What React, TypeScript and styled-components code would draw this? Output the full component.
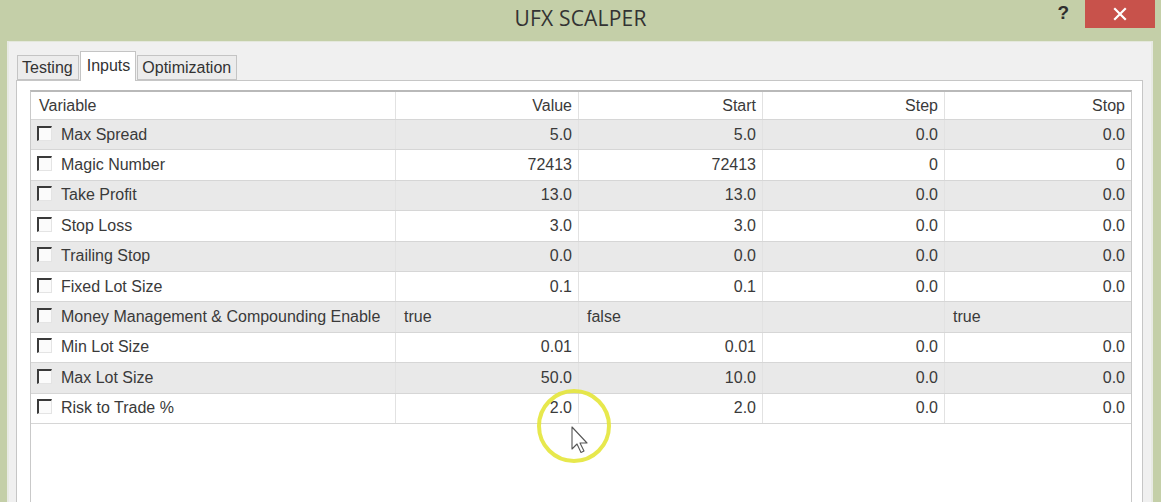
import styled, { createGlobalStyle } from "styled-components";

const GlobalStyle = createGlobalStyle`
  html, body {
    margin: 0;
    padding: 0;
    background: #c4cfa8;
    overflow: hidden;
  }
`;

type Row = {
  name: string;
  value: string;
  start: string;
  step: string;
  stop: string;
  text?: boolean;
};

const rows: Row[] = [
  { name: "Max Spread", value: "5.0", start: "5.0", step: "0.0", stop: "0.0" },
  { name: "Magic Number", value: "72413", start: "72413", step: "0", stop: "0" },
  { name: "Take Profit", value: "13.0", start: "13.0", step: "0.0", stop: "0.0" },
  { name: "Stop Loss", value: "3.0", start: "3.0", step: "0.0", stop: "0.0" },
  { name: "Trailing Stop", value: "0.0", start: "0.0", step: "0.0", stop: "0.0" },
  { name: "Fixed Lot Size", value: "0.1", start: "0.1", step: "0.0", stop: "0.0" },
  {
    name: "Money Management & Compounding Enable",
    value: "true",
    start: "false",
    step: "",
    stop: "true",
    text: true,
  },
  { name: "Min Lot Size", value: "0.01", start: "0.01", step: "0.0", stop: "0.0" },
  { name: "Max Lot Size", value: "50.0", start: "10.0", step: "0.0", stop: "0.0" },
  { name: "Risk to Trade %", value: "2.0", start: "2.0", step: "0.0", stop: "0.0" },
];

const Frame = styled.div`
  position: relative;
  width: 1161px;
  height: 502px;
  display: flex;
  flex-direction: column;
  background: #c4cfa8;
  font-family: "Liberation Sans", Arial, sans-serif;
  color: #3a3a3a;
  overflow: hidden;
`;

const TitleBar = styled.div`
  height: 41px;
  flex: none;
  display: grid;
  grid-template-columns: 1fr auto 1fr;
  align-items: start;
`;

const Title = styled.div`
  grid-column: 2;
  padding-top: 4px;
  font-family: "Open Sans", "Noto Sans", sans-serif;
  font-size: 21px;
  color: #333;
  letter-spacing: 0.2px;
`;

const Controls = styled.div`
  grid-column: 3;
  justify-self: end;
  display: flex;
  align-items: flex-start;
  gap: 16px;
  padding-right: 6px;
`;

const Help = styled.span`
  font-family: "Liberation Sans", Arial, sans-serif;
  font-weight: bold;
  font-size: 19px;
  color: #2e2e2e;
  padding-top: 2px;
`;

const CloseButton = styled.div`
  width: 70px;
  height: 28px;
  background: #c8524b;
  display: flex;
  align-items: center;
  justify-content: center;
`;

const Body = styled.div`
  flex: 1;
  margin: 0 8px 0 7px;
  background: #f0f0f0;
  border-top: 1px solid #e4e8dc;
  border-left: 2px solid #e8eae4;
  border-right: 2px solid #e8eae4;
  display: flex;
  flex-direction: column;
`;

const TabStrip = styled.div`
  display: flex;
  align-items: flex-end;
  gap: 1px;
  padding: 8px 0 0 8px;
  height: 30px;
`;

const Tab = styled.div<{ $active?: boolean }>`
  height: ${(p) => (p.$active ? 30 : 25)}px;
  box-sizing: border-box;
  padding: ${(p) => (p.$active ? "5px 5px 0 6px" : "3px 5px 0 4px")};
  border: 1px solid #c4c4c4;
  border-bottom: ${(p) => (p.$active ? "none" : "1px solid #c4c4c4")};
  background: ${(p) => (p.$active ? "#ffffff" : "#ececec")};
  font-size: 16px;
  color: #333;
  margin-bottom: ${(p) => (p.$active ? "-1px" : "0")};
  position: relative;
  z-index: ${(p) => (p.$active ? 1 : 0)};
`;

const Panel = styled.div`
  flex: 1;
  margin: 0 8px 0 7px;
  background: #ffffff;
  border: 1px solid #c6c6c6;
  border-bottom: none;
  padding: 9px 10px 0 13px;
`;

const Grid = styled.div`
  height: 100%;
  border: 1px solid #c9c9c9;
  border-bottom: none;
  box-sizing: border-box;
  border-top: 2px solid #b9b9b9;
`;

const RowBox = styled.div<{ $shade?: boolean; $head?: boolean }>`
  display: grid;
  grid-template-columns: 365px 183px 184px 182px 1fr;
  height: ${(p) => (p.$head ? "28px" : "30.4px")};
  box-sizing: border-box;
  background: ${(p) => (p.$shade ? "#e9e9e9" : "#ffffff")};
  border-bottom: 1px solid #d6d6d6;
  font-size: 16px;
`;

const Cell = styled.div<{ $left?: boolean }>`
  display: flex;
  align-items: center;
  justify-content: ${(p) => (p.$left ? "flex-start" : "flex-end")};
  padding: ${(p) => (p.$left ? "0 6px 0 8px" : "0 6px 0 6px")};
  border-right: 1px solid #e2e2e2;
  white-space: nowrap;
  overflow: hidden;
  &:last-child {
    border-right: none;
  }
`;

const NameCell = styled(Cell)`
  padding-left: 6px;
  gap: 9px;
`;

const Check = styled.span`
  width: 15px;
  height: 15px;
  box-sizing: border-box;
  flex: none;
  border-top: 2px solid #3a3a3a;
  border-left: 2px solid #3a3a3a;
  border-right: 1px solid #e4e4e4;
  border-bottom: 1px solid #e4e4e4;
  background: #fbfbfb;
  margin-bottom: 3px;
`;

const Highlight = styled.svg`
  position: absolute;
  left: 534px;
  top: 386px;
  pointer-events: none;
`;

export default function App() {
  return (
    <>
      <GlobalStyle />
      <Frame>
        <TitleBar>
          <Title>UFX SCALPER</Title>
          <Controls>
            <Help>?</Help>
            <CloseButton>
              <svg width="14" height="14" viewBox="0 0 14 14">
                <path
                  d="M2 2 L12 12 M12 2 L2 12"
                  stroke="#ffffff"
                  strokeWidth="2.2"
                  strokeLinecap="square"
                />
              </svg>
            </CloseButton>
          </Controls>
        </TitleBar>
        <Body>
          <TabStrip>
            <Tab>Testing</Tab>
            <Tab $active>Inputs</Tab>
            <Tab>Optimization</Tab>
          </TabStrip>
          <Panel>
            <Grid>
              <RowBox $head>
                <Cell $left>Variable</Cell>
                <Cell>Value</Cell>
                <Cell>Start</Cell>
                <Cell>Step</Cell>
                <Cell>Stop</Cell>
              </RowBox>
              {rows.map((r, i) => (
                <RowBox key={r.name} $shade={i % 2 === 0}>
                  <NameCell $left>
                    <Check />
                    {r.name}
                  </NameCell>
                  <Cell $left={r.text}>{r.value}</Cell>
                  <Cell $left={r.text}>{r.start}</Cell>
                  <Cell $left={r.text}>{r.step}</Cell>
                  <Cell $left={r.text}>{r.stop}</Cell>
                </RowBox>
              ))}
            </Grid>
          </Panel>
        </Body>
        <Highlight width="82" height="82" viewBox="0 0 82 82">
          <circle cx="40" cy="40" r="35" fill="none" stroke="#e4e63a" strokeWidth="4" opacity="0.9" />
          <path
            d="M38 41 L38 63 L43 58 L47 66.5 L50 65 L46 57 L53 57 Z"
            fill="#ffffff"
            stroke="#555"
            strokeWidth="1.1"
            strokeLinejoin="round"
          />
        </Highlight>
      </Frame>
    </>
  );
}
